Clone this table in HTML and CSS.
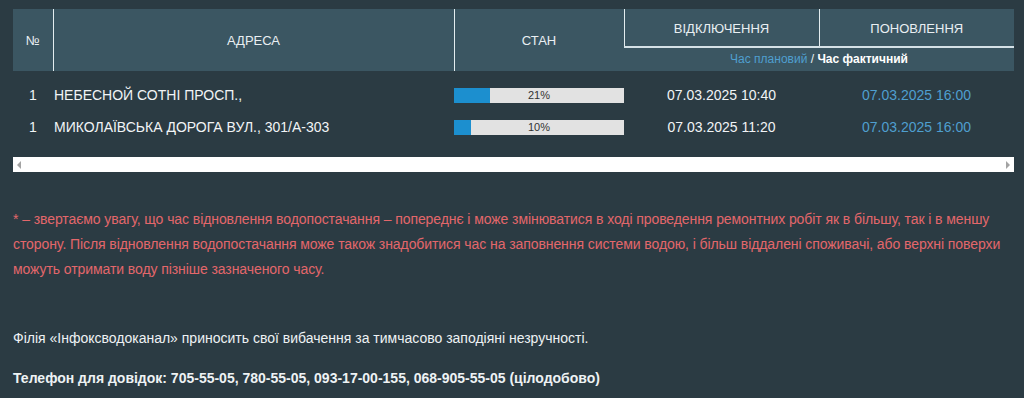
FILE: index.html
```html
<!DOCTYPE html>
<html lang="uk">
<head>
  <meta charset="UTF-8">
  <meta name="viewport" content="width=device-width, initial-scale=1.0">
  <title>Відключення водопостачання</title>
  <link rel="stylesheet" href="styles.css">
</head>
<body>
  <div class="outages">
    <table class="outage-table">
      <thead>
        <tr>
          <th rowspan="2" class="col-num">№</th>
          <th rowspan="2" class="col-addr">АДРЕСА</th>
          <th rowspan="2" class="col-state">СТАН</th>
          <th class="col-time">ВІДКЛЮЧЕННЯ</th>
          <th class="col-time">ПОНОВЛЕННЯ</th>
        </tr>
        <tr>
          <th colspan="2" class="time-legend">
            <span class="planned">Час плановий</span> / <b>Час фактичний</b>
          </th>
        </tr>
      </thead>
      <tbody>
        <tr>
          <td class="num">1</td>
          <td class="addr">НЕБЕСНОЙ СОТНІ ПРОСП.,</td>
          <td>
            <div class="progress">
              <div class="progress-fill" style="width: 21%"></div>
              <span class="progress-label">21%</span>
            </div>
          </td>
          <td class="time">07.03.2025 10:40</td>
          <td class="time planned">07.03.2025 16:00</td>
        </tr>
        <tr>
          <td class="num">1</td>
          <td class="addr">МИКОЛАЇВСЬКА ДОРОГА ВУЛ., 301/А-303</td>
          <td>
            <div class="progress">
              <div class="progress-fill" style="width: 10%"></div>
              <span class="progress-label">10%</span>
            </div>
          </td>
          <td class="time">07.03.2025 11:20</td>
          <td class="time planned">07.03.2025 16:00</td>
        </tr>
      </tbody>
    </table>

    <div class="hscroll">
      <span class="arrow arrow-left"></span>
      <span class="arrow arrow-right"></span>
    </div>
  </div>

  <p class="notice">
    * – звертаємо увагу, що час відновлення водопостачання – попереднє і може змінюватися в ході проведення ремонтних робіт як в більшу, так і в меншу
    сторону. Після відновлення водопостачання може також знадобитися час на заповнення системи водою, і більш віддалені споживачі, або верхні поверхи
    можуть отримати воду пізніше зазначеного часу.
  </p>

  <p class="apology">Філія «Інфоксводоканал» приносить свої вибачення за тимчасово заподіяні незручності.</p>

  <p class="phones">Телефон для довідок: 705-55-05, 780-55-05, 093-17-00-155, 068-905-55-05 (цілодобово)</p>
</body>
</html>
```

FILE: styles.css
```css
* {
  margin: 0;
  padding: 0;
  box-sizing: border-box;
}

body {
  font-family: "Liberation Sans", Arial, sans-serif;
  background-color: #2b3b43;
  color: #eef2f4;
  padding: 9px 10px 0 13px;
}

.outages {
  width: 1001px;
}

.outage-table {
  width: 100%;
  border-collapse: collapse;
  table-layout: fixed;
}

.outage-table th {
  background-color: #3b5662;
  color: #e9eff2;
  font-size: 13px;
  font-weight: normal;
  text-align: center;
  border-left: 1px solid #e3ecef;
}

.outage-table thead tr:first-child th {
  height: 38px;
}

.outage-table th:first-child {
  border-left: none;
}

.col-num {
  width: 40px;
}

.col-addr {
  width: 401px;
}

.col-state {
  width: 170px;
}

.col-time {
  width: 195px;
}

.outage-table thead tr:first-child th.col-time {
  border-bottom: 2px solid #d5e1e6;
  padding-top: 2px;
}

.outage-table th.time-legend {
  height: 24px;
  font-size: 12px;
  padding-bottom: 2px;
}

.time-legend b {
  color: #ffffff;
}

.planned {
  color: #4f9fcf;
}

.outage-table td {
  height: 32px;
  font-size: 14px;
  color: #f1f4f6;
}

.outage-table tbody tr:first-child td {
  height: 40px;
  padding-top: 8px;
}

.outage-table td.num {
  text-align: center;
}

.outage-table td.addr {
  padding-left: 1px;
}

.outage-table td.time {
  text-align: center;
}

.outage-table td.time.planned {
  color: #4f9fcf;
}

.progress {
  position: relative;
  height: 15px;
  background-color: #e2e2e2;
}

.progress-fill {
  height: 100%;
  background-color: #1c8fcf;
}

.progress-label {
  position: absolute;
  left: 0;
  right: 0;
  top: 0;
  line-height: 15px;
  text-align: center;
  font-size: 11px;
  color: #333;
}

.hscroll {
  display: flex;
  justify-content: space-between;
  align-items: center;
  height: 15px;
  margin-top: 14px;
  padding: 0 4px;
  background-color: #ffffff;
}

.arrow {
  width: 0;
  height: 0;
  border-top: 4px solid transparent;
  border-bottom: 4px solid transparent;
}

.arrow-left {
  border-right: 4px solid #a3a3a3;
}

.arrow-right {
  border-left: 4px solid #a3a3a3;
}

.notice {
  margin-top: 35px;
  font-size: 14px;
  line-height: 25px;
  letter-spacing: -0.08px;
  color: #e3676b;
}

.apology {
  margin-top: 44px;
  font-size: 14px;
  line-height: 25px;
}

.phones {
  margin-top: 15px;
  font-size: 14px;
  line-height: 25px;
  font-weight: bold;
}
```
